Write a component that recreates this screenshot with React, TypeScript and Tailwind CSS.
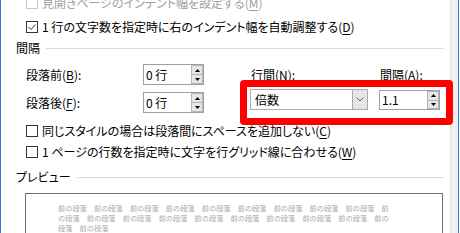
import React from "react";

const FONT = "font-['Noto_Sans_CJK_JP',sans-serif] [font-feature-settings:'palt']";

function Check({ checked, faded }: { checked?: boolean; faded?: boolean }) {
  return (
    <span
      className={
        faded
          ? "w-[12px] h-[12px] border border-[#cccccc] bg-white flex items-center justify-center shrink-0"
          : "w-[12px] h-[12px] border border-[#333333] bg-white flex items-center justify-center shrink-0"
      }
    >
      {checked && (
        <svg width="10" height="10" viewBox="0 0 10 10">
          <polyline points="1.5,5 4,7.5 8.5,2.5" fill="none" stroke="#333333" strokeWidth="1" />
        </svg>
      )}
    </span>
  );
}

function U({ children }: { children: React.ReactNode }) {
  return <span className="underline underline-offset-[2px]">{children}</span>;
}

function Spin({ value, h = "h-[21px]" }: { value: string; h?: string }) {
  return (
    <div className={`w-[61px] ${h} border border-[#a0a0a0] bg-white flex items-stretch pr-[0px]`}>
      <span className="flex-1 flex items-center pl-[2px] text-[12px] leading-none">{value}</span>
      <div className="w-[12px] flex flex-col border border-[#b5b5b5] bg-[#e6e6e6]">
        <div className="flex-1 flex items-center justify-center border-b border-[#b5b5b5]">
          <svg width="5" height="3" viewBox="0 0 5 3">
            <polygon points="0,3 5,3 2.5,0" fill="#000000" />
          </svg>
        </div>
        <div className="flex-1 flex items-center justify-center">
          <svg width="5" height="3" viewBox="0 0 5 3">
            <polygon points="0,0 5,0 2.5,3" fill="#000000" />
          </svg>
        </div>
      </div>
    </div>
  );
}

export default function App() {
  const l1 = "前の段落　".repeat(9) + "前";
  const l2 = "の段落　" + "前の段落　".repeat(8) + "前の";
  const l3 = "段落　前の段落";
  return (
    <div className={`relative w-[460px] h-[233px] overflow-hidden bg-white flex text-[12px] text-black ${FONT}`}>
      <div className="w-[1px] bg-[#2b7cd3] shrink-0" />
      <div className="flex-1 flex flex-col pl-[15px] pr-[6px] min-w-0">
        <div className="h-[24px] mt-[-9px] shrink-0 flex items-center gap-[4px] ml-[10px] text-[#a0a0a0] whitespace-nowrap">
          <Check faded />
          <span>見開きページのインデント幅を設定する(<U>M</U>)</span>
        </div>
        <div className="h-[24px] shrink-0 flex items-center gap-[4px] ml-[10px] whitespace-nowrap">
          <Check checked />
          <span>1 行の文字数を指定時に右のインデント幅を自動調整する(<U>D</U>)</span>
        </div>
        <div className="h-[18px] shrink-0 flex items-center gap-[6px]">
          <span>間隔</span>
          <div className="flex-1 h-[1px] bg-[#dcdcdc]" />
        </div>
        <div className="mt-[7px] shrink-0 flex">
          <div className="ml-[10px] grid grid-cols-[117px_61px] gap-y-[7px] items-center">
            <span className="whitespace-nowrap">段落前(<U>B</U>):</span>
            <Spin value="0 行" />
            <span className="whitespace-nowrap">段落後(<U>F</U>):</span>
            <Spin value="0 行" />
          </div>
          <div className="ml-[46px] flex flex-col">
            <div className="h-[21px] flex items-center">
              <span className="w-[130px] pl-[1px] whitespace-nowrap">行間(<U>N</U>):</span>
              <span className="whitespace-nowrap">間隔(<U>A</U>):</span>
            </div>
            <div className="mt-[4px] flex gap-[11px] items-start">
              <div className="w-[118px] h-[21px] border border-[#acacac] bg-white flex">
                <span className="flex-1 flex items-center pl-[4px]">倍数</span>
                <div className="w-[15px] bg-[#e5e5e5] border-l border-[#acacac] flex items-center justify-center">
                  <svg width="8" height="5" viewBox="0 0 8 5">
                    <polyline points="0.5,0.5 4,4 7.5,0.5" fill="none" stroke="#606060" strokeWidth="1" />
                  </svg>
                </div>
              </div>
              <div className="mt-[1px]">
                <Spin value="1.1" h="h-[20px]" />
              </div>
            </div>
          </div>
        </div>
        <div className="h-[21px] mt-[7px] shrink-0 flex items-center gap-[4px] ml-[10px] whitespace-nowrap">
          <Check />
          <span>同じスタイルの場合は段落間にスペースを追加しない(<U>C</U>)</span>
        </div>
        <div className="h-[21px] shrink-0 flex items-center gap-[4px] ml-[10px] whitespace-nowrap">
          <Check />
          <span>1 ページの行数を指定時に文字を行グリッド線に合わせる(<U>W</U>)</span>
        </div>
        <div className="h-[18px] mt-[6px] shrink-0 flex items-center gap-[6px]">
          <span>プレビュー</span>
          <div className="flex-1 h-[1px] bg-[#dcdcdc]" />
        </div>
        <div className="mt-[7px] ml-[9px] mr-[1px] h-[60px] shrink-0 border border-[#6d6d6d] pt-[9px] pl-[32px] text-[7.2px] leading-[10px] text-[#a8a8a8] whitespace-pre [font-feature-settings:normal]">
          <div>{l1}</div>
          <div>{l2}</div>
          <div>{l3}</div>
        </div>
      </div>
      <div className="w-[8px] bg-[#f0f0f0] border-l border-[#e3e3e3] shrink-0" />
      <div className="w-[1px] bg-[#2b7cd3] shrink-0" />
      <div className="w-[1px] bg-white shrink-0" />
      <div className="absolute left-[240px] top-[80px] w-[213px] h-[45px] border-[7px] border-[#ff0000] rounded-[4px]" />
    </div>
  );
}
